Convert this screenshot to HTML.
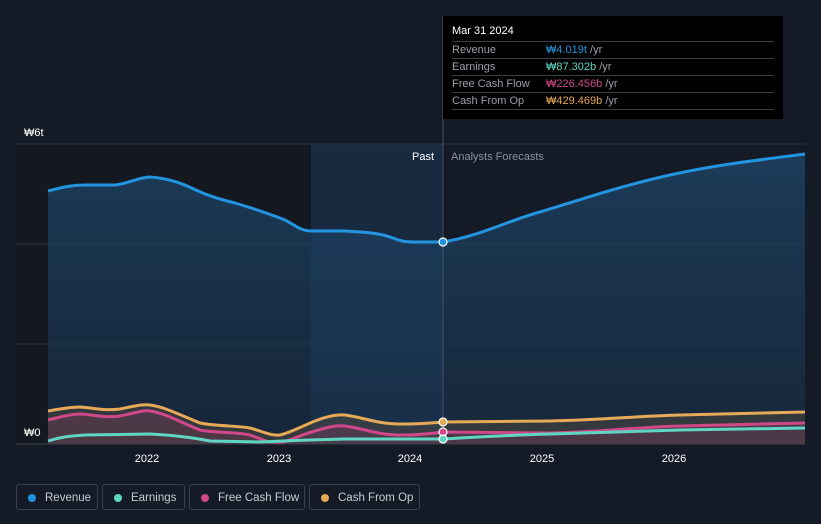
<!DOCTYPE html>
<html><head><style>
body{margin:0;background:#151b26;font-family:"Liberation Sans",sans-serif;}
.wrap{position:relative;width:821px;height:524px;overflow:hidden;background:#151b26}
.tt{position:absolute;left:443px;top:16px;width:340px;height:103px;background:#000;color:#fff;font-size:11px}
.tt .h{position:absolute;left:9px;top:9px;font-size:11px}
.row{position:absolute;left:9px;width:322px;height:17px;border-top:1px solid #3a3f47;color:#9aa0a8;line-height:17px}
.row span{position:absolute;left:94px}
.leg{position:absolute;top:484px;height:26px;border:1px solid #3a404b;border-radius:3px;color:#c8ccd2;font-size:11.5px;line-height:26px;box-sizing:border-box}
.leg i{position:absolute;left:11px;top:9px;width:8px;height:8px;border-radius:50%}
.leg b{font-weight:normal;position:absolute;left:28px}
</style></head><body><div class="wrap">
<svg width="821" height="524" style="position:absolute;left:0;top:0">
<defs>
<linearGradient id="rg" x1="0" y1="0" x2="0" y2="1"><stop offset="0" stop-color="#1d4466" stop-opacity=".8"/><stop offset="1" stop-color="#1a3350" stop-opacity=".5"/></linearGradient>
</defs>
<rect x="16" y="144" width="295" height="300" fill="#131821"/>
<rect x="311" y="144" width="132" height="300" fill="#172a40"/>
<line x1="16" y1="144" x2="805" y2="144" stroke="#2c323c"/>
<line x1="16" y1="244" x2="805" y2="244" stroke="#2c323c"/>
<line x1="16" y1="344" x2="805" y2="344" stroke="#2c323c"/>
<path d="M48,191 C60,188 70,185 85,185 L115,185 C130,183 140,177 150,177 C165,178 175,181 185,185 C200,192 210,197 235,203 C255,209 270,214 285,220 C295,225 300,231 312,231 L345,231 C365,232 380,233 393,238 C400,241 405,242 415,242 L443,242 C480,236 510,220 540,212 C580,200 620,186 670,175 C720,164 760,160 805,154 L805,444 L48,444 Z" fill="url(#rg)"/>
<path d="M48,411 C60,409 70,407 80,407 C95,408 105,411 120,409 C135,406 142,404 150,405 C165,407 180,415 200,423 C215,426 240,426 250,428 C262,431 270,436 280,435 C292,432 300,427 315,421 C325,417 335,414 345,415 C360,417 370,421 385,423 C400,425 420,424 443,422 L550,421 C600,420 640,416 680,415 L805,412 L805,444 L48,444Z" fill="#6a5a40" opacity=".35"/>
<path d="M48,420 C60,417 70,414 82,414 C95,415 105,418 120,416 C135,413 142,410 150,411 C165,413 180,422 200,430 C215,433 240,432 250,435 C262,439 270,444 280,443 C292,440 300,435 315,431 C325,428 335,425 345,426 C360,428 370,432 385,434 C400,436 420,435 443,432 L550,433 C600,432 640,427 680,426 L805,423 L805,444 L48,444Z" fill="#7a3a5a" opacity=".35"/>
<path d="M48,191 C60,188 70,185 85,185 L115,185 C130,183 140,177 150,177 C165,178 175,181 185,185 C200,192 210,197 235,203 C255,209 270,214 285,220 C295,225 300,231 312,231 L345,231 C365,232 380,233 393,238 C400,241 405,242 415,242 L443,242 C480,236 510,220 540,212 C580,200 620,186 670,175 C720,164 760,160 805,154" fill="none" stroke="#2394df" stroke-width="3"/>
<path d="M48,411 C60,409 70,407 80,407 C95,408 105,411 120,409 C135,406 142,404 150,405 C165,407 180,415 200,423 C215,426 240,426 250,428 C262,431 270,436 280,435 C292,432 300,427 315,421 C325,417 335,414 345,415 C360,417 370,421 385,423 C400,425 420,424 443,422 L550,421 C600,420 640,416 680,415 L805,412" fill="none" stroke="#e6a957" stroke-width="3"/>
<path d="M48,420 C60,417 70,414 82,414 C95,415 105,418 120,416 C135,413 142,410 150,411 C165,413 180,422 200,430 C215,433 240,432 250,435 C262,439 270,444 280,443 C292,440 300,435 315,431 C325,428 335,425 345,426 C360,428 370,432 385,434 C400,436 420,435 443,432 L550,433 C600,432 640,427 680,426 L805,423" fill="none" stroke="#d0488a" stroke-width="3"/>
<path d="M48,441 C60,437 70,436 85,435 L150,434 C170,435 190,437 210,441 L260,442 C280,441 300,440 345,439 L443,439 C480,437 510,435 550,434 L680,430 L805,428" fill="none" stroke="#5fd6c4" stroke-width="3"/>
<line x1="443" y1="16" x2="443" y2="444" stroke="#4a5060"/>
<line x1="16" y1="444" x2="805" y2="444" stroke="#3a404b"/>
<circle cx="443" cy="242" r="4" fill="#2394df" stroke="#fff" stroke-width="1.2"/>
<circle cx="443" cy="422" r="4" fill="#e6a957" stroke="#fff" stroke-width="1.2"/>
<circle cx="443" cy="432" r="4" fill="#d0488a" stroke="#fff" stroke-width="1.2"/>
<circle cx="443" cy="439" r="4" fill="#5fd6c4" stroke="#fff" stroke-width="1.2"/>
<g font-size="11" fill="#fff" font-family="Liberation Sans,sans-serif">
<text x="24" y="136">₩6t</text><text x="24" y="436">₩0</text>
<text x="412" y="160">Past</text>
<text x="451" y="160" fill="#8a9099">Analysts Forecasts</text>
<g text-anchor="middle"><text x="147" y="462">2022</text><text x="279" y="462">2023</text><text x="410" y="462">2024</text><text x="542" y="462">2025</text><text x="674" y="462">2026</text></g>
</g>
</svg>
<div class="tt"><div class="h">Mar 31 2024</div>
<div class="row" style="top:25px">Revenue<span style="color:#2394df">₩4.019t <em style="color:#9aa0a8;font-style:normal">/yr</em></span></div>
<div class="row" style="top:42px">Earnings<span style="color:#5fd6c4">₩87.302b <em style="color:#9aa0a8;font-style:normal">/yr</em></span></div>
<div class="row" style="top:59px">Free Cash Flow<span style="color:#d0488a">₩226.456b <em style="color:#9aa0a8;font-style:normal">/yr</em></span></div>
<div class="row" style="top:76px">Cash From Op<span style="color:#e6a957">₩429.469b <em style="color:#9aa0a8;font-style:normal">/yr</em></span></div>
<div class="row" style="top:93px;height:0"></div>
</div>
<div class="leg" style="left:16px;width:82px"><i style="background:#2394df"></i><b>Revenue</b></div>
<div class="leg" style="left:102px;width:83px"><i style="background:#5fd6c4"></i><b>Earnings</b></div>
<div class="leg" style="left:189px;width:116px"><i style="background:#d0488a"></i><b>Free Cash Flow</b></div>
<div class="leg" style="left:309px;width:111px"><i style="background:#e6a957"></i><b>Cash From Op</b></div>
</div></body></html>
